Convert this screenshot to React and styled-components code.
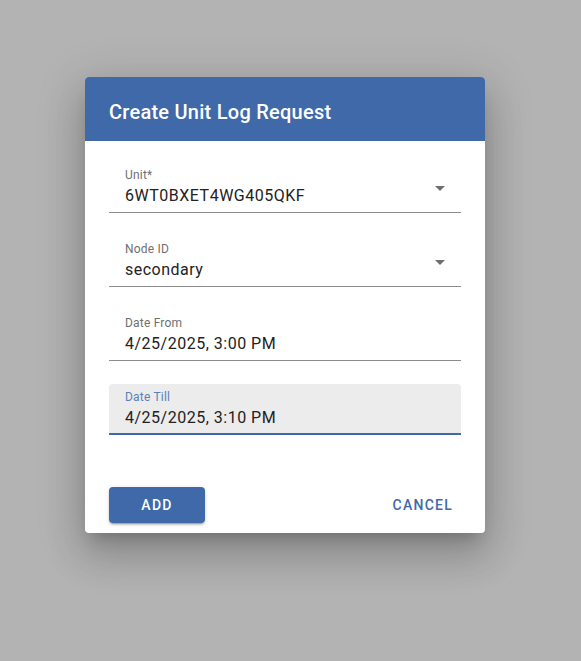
import React from "react";
import styled, { createGlobalStyle } from "styled-components";

const Global = createGlobalStyle`
  html, body { margin: 0; padding: 0; background: #b3b3b3; }
  body { font-family: Roboto, "Liberation Sans", Arial, sans-serif; }
  * { box-sizing: border-box; }
`;

const Page = styled.div`
  width: 581px;
  height: 661px;
  background: #b3b3b3;
  padding: 77px 0 0 85px;
`;

const Dialog = styled.div`
  width: 400px;
  height: 456px;
  background: #fff;
  border-radius: 4px;
  overflow: hidden;
  display: flex;
  flex-direction: column;
  box-shadow: 0 11px 15px -7px rgba(0,0,0,0.2), 0 24px 38px 3px rgba(0,0,0,0.14), 0 9px 46px 8px rgba(0,0,0,0.12);
`;

const Header = styled.div`
  height: 64px;
  background: #3f69a8;
  color: #fff;
  display: flex;
  align-items: center;
  padding: 6px 24px 0;
  font-size: 20px;
  font-weight: 500;
  letter-spacing: 0.25px;
`;

const Content = styled.div`
  padding: 21px 24px 0;
  display: flex;
  flex-direction: column;
  gap: 23px;
`;

const Field = styled.div`
  position: relative;
  height: 51px;
  padding: 5px 40px 0 16px;
  background: ${p => (p.$focused ? "#ececec" : "transparent")};
  border-radius: 4px 4px 0 0;
  border-bottom: ${p => (p.$focused ? "2px solid #3f69a8" : "1px solid #8c8c8c")};
`;

const Label = styled.div`
  font-size: 12px;
  line-height: 16px;
  color: ${p => (p.$focused ? "#5b7fb8" : "#6f6f6f")};
  letter-spacing: 0.2px;
`;

const Value = styled.div`
  margin-top: 3px;
  font-size: 16px;
  line-height: 20px;
  color: #222;
  letter-spacing: 0.5px;
  white-space: nowrap;
`;

const Arrow = styled.div`
  position: absolute;
  right: 16px;
  top: 24px;
  width: 0;
  height: 0;
  border-left: 5px solid transparent;
  border-right: 5px solid transparent;
  border-top: 5px solid #6f6f6f;
`;

const Actions = styled.div`
  margin-top: auto;
  padding: 0 24px 10px;
  display: flex;
  justify-content: space-between;
  align-items: center;
`;

const Button = styled.button`
  height: 36px;
  min-width: ${p => (p.$primary ? "96px" : "64px")};
  padding: 0 8px;
  border: none;
  border-radius: 4px;
  font-family: Roboto, "Liberation Sans", Arial, sans-serif;
  font-size: 14px;
  font-weight: 500;
  letter-spacing: 1.25px;
  text-transform: uppercase;
  background: ${p => (p.$primary ? "#3f69a8" : "transparent")};
  color: ${p => (p.$primary ? "#fff" : "#3f69a8")};
  box-shadow: ${p =>
    p.$primary
      ? "0 3px 1px -2px rgba(0,0,0,0.2), 0 2px 2px 0 rgba(0,0,0,0.14), 0 1px 5px 0 rgba(0,0,0,0.12)"
      : "none"};
`;

const fields = [
  { label: "Unit*", value: "6WT0BXET4WG405QKF", select: true },
  { label: "Node ID", value: "secondary", select: true },
  { label: "Date From", value: "4/25/2025, 3:00 PM" },
  { label: "Date Till", value: "4/25/2025, 3:10 PM", focused: true },
];

export default function App() {
  return (
    <Page>
      <Global />
      <Dialog>
        <Header>Create Unit Log Request</Header>
        <Content>
          {fields.map(f => (
            <Field key={f.label} $focused={f.focused}>
              <Label $focused={f.focused}>{f.label}</Label>
              <Value>{f.value}</Value>
              {f.select && <Arrow />}
            </Field>
          ))}
        </Content>
        <Actions>
          <Button $primary>Add</Button>
          <Button>Cancel</Button>
        </Actions>
      </Dialog>
    </Page>
  );
}
